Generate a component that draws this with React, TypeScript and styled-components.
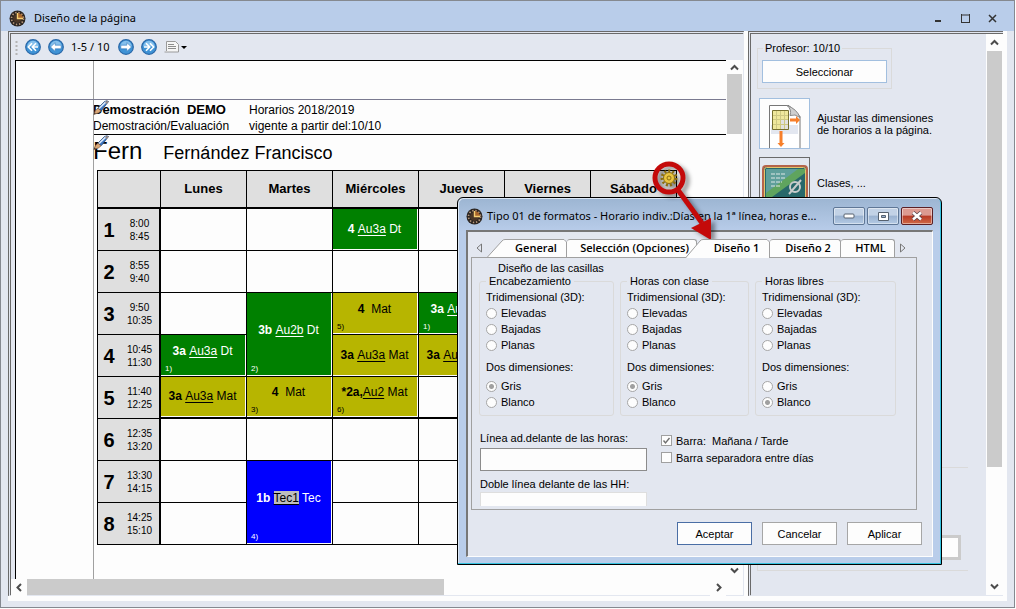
import React from "react";
import styled, { createGlobalStyle } from "styled-components";

const Global = createGlobalStyle`
  * { box-sizing: border-box; }
  html, body { margin: 0; height: 100%; background: #fdfdfd; overflow: hidden; }
  body, button, input { font-family: "Liberation Sans", Arial, sans-serif; font-size: 11px; line-height: 16px; color: #000; }
  button { cursor: pointer; }
`;

const frame = "#b9cdea";
const face = "#e3e7f0";

const AppWindow = styled.main`
  position: relative;
  display: flex;
  flex-direction: column;
  height: calc(100vh - 1px);
  margin-right: 1px;
  border: 1px solid #858990;
  background: ${face};
  overflow: hidden;
`;

const TitleBar = styled.header`
  display: flex;
  align-items: center;
  height: 30px;
  flex: none;
  padding: 4px 8px 0 8px;
  background: ${frame};
`;

const WindowTitle = styled.h1`
  flex: 1;
  margin: 0 0 0 8px;
  font: 400 11px/16px "Noto Sans", sans-serif;
`;

const CaptionButton = styled.button`
  display: flex;
  align-items: center;
  justify-content: center;
  width: 27px;
  height: 20px;
  padding: 0;
  border: 0;
  background: none;
`;

const Workspace = styled.div`
  flex: 1;
  min-height: 0;
  display: flex;
  gap: 4px;
  margin: 0 7px 6px 7px;
  border-bottom: 5px solid #fdfdfd;
  border-right: 4px solid #fdfdfd;
  background: #fdfdfd;
`;

const Pane = styled.section`
  display: flex;
  min-width: 0;
  border: 3px double #6a6a6a;
  border-right: 0;
  border-bottom: 1px solid ${face};
  background: ${face};
`;

const DesignPane = styled(Pane)`
  flex: 1;
  flex-direction: column;
  border-right: 1px solid ${face};
`;

const SidePane = styled(Pane)`
  flex: none;
  width: 255px;
`;

const Toolbar = styled.div`
  display: flex;
  align-items: center;
  gap: 7px;
  height: 26px;
  flex: none;
  padding-left: 4px;
`;

const ToolButton = styled.button`
  display: flex;
  align-items: center;
  padding: 0;
  border: 0;
  background: none;
`;

const Counter = styled.span`
  min-width: 40px;
  font: 11px/16px "Noto Sans", sans-serif;
`;

const Canvas = styled.div`
  flex: 1;
  min-height: 0;
  display: flex;
`;

const Paper = styled.div`
  position: relative;
  flex: 1;
  min-width: 0;
  margin-left: 4px;
  border-top: 1px solid #000;
  border-left: 1px solid #000;
  background: #fdfdfd;
  font-size: 12px;
  overflow: hidden;
`;

const VerticalGuide = styled.i`
  position: absolute;
  top: 0;
  bottom: 0;
  left: 77px;
  border-left: 1px solid #a0a0a0;
`;

const HorizontalGuide = styled.i`
  position: absolute;
  left: 0;
  right: 0;
  top: 38px;
  border-top: 1px solid #7a7a90;
`;

const PageHead = styled.div`
  display: grid;
  grid-template-columns: 156px 1fr;
  margin: 41px 0 0 77px;
  border-bottom: 1px solid #000;
  white-space: pre;
`;

const School = styled.strong`
  font-size: 13px;
`;

const TeacherLine = styled.h2`
  display: flex;
  align-items: baseline;
  gap: 21px;
  height: 35px;
  margin: 0 0 0 77px;
  padding-top: 4px;
  font-weight: 400;
  font-size: 18px;
  line-height: 24px;
`;

const ShortName = styled.span`
  font-size: 24px;
`;

const PencilMark = styled.svg`
  position: absolute;
  left: 77px;
`;

const Timetable = styled.table`
  width: 580px;
  margin-left: 81px;
  table-layout: fixed;
  border-spacing: 0;
  border-left: 1px solid #000;
  border-top: 1px solid #000;
  font-size: 12px;
`;

const DayHead = styled.th`
  height: 38px;
  padding: 0;
  border-right: 1px solid #000;
  border-bottom: 2px solid #000;
  background: #dfdfdf;
  font-size: 13px;
`;

const HourHead = styled.th`
  height: 42px;
  padding: 0;
  border-right: 2px solid #000;
  border-bottom: 1px solid #000;
  background: #dfdfdf;
  font-weight: 400;
`;

const HourBox = styled.div`
  display: grid;
  grid-template-columns: 22px 1fr;
  align-items: center;
  font-size: 10px;
  line-height: 13px;
  b { font-size: 20px; line-height: 24px; }
`;

const Slot = styled.td<{ $fill?: string; $ink?: string; $noted?: boolean; $heavy?: boolean }>`
  position: relative;
  height: 42px;
  padding: 0 2px ${(p) => (p.$noted ? 10 : 2)}px 0;
  border-right: 1px solid #000;
  border-bottom: ${(p) => (p.$heavy ? 2 : 1)}px solid #000;
  background: ${(p) => p.$fill || "#fdfdfd"};
  color: ${(p) => p.$ink || "#000"};
  box-shadow: inset -1px -1px 0 #fdfdfd;
  text-align: center;
  white-space: pre;
  u { text-underline-offset: 2px; }
`;

const Shaded = styled.u`
  background: #bdbdbd;
  color: #000;
`;

const Footnote = styled.small`
  position: absolute;
  left: 4px;
  bottom: 2px;
  font-size: 8px;
  line-height: 10px;
`;

const VerticalScroll = styled.div`
  display: flex;
  flex-direction: column;
  justify-content: space-between;
  align-items: center;
  width: 17px;
  flex: none;
  background: #fdfdfd;
`;

const HorizontalScroll = styled.div`
  display: flex;
  align-items: center;
  height: 16px;
  flex: none;
  padding-right: 17px;
  background: #fdfdfd;
`;

const ScrollArrow = styled.button<{ $short?: boolean }>`
  display: flex;
  align-items: center;
  justify-content: center;
  width: 16px;
  height: ${(p) => (p.$short ? 14 : 17)}px;
  padding: 0;
  border: 0;
  background: #fdfdfd;
`;

const ThumbTrack = styled.div`
  flex: 1;
  align-self: stretch;
`;

const Thumb = styled.div<{ $w?: string; $h?: string; $flush?: boolean }>`
  width: ${(p) => p.$w || "15px"};
  height: ${(p) => p.$h || "15px"};
  margin: 0 ${(p) => (p.$flush ? 0 : "auto")};
  background: #cbcbcb;
`;

const SideTrack = styled(ThumbTrack)`
  display: flex;
  justify-content: center;
`;

const SideContent = styled.div`
  flex: 1;
  display: flex;
  flex-direction: column;
  padding: 8px 18px 24px 6px;
`;

const TeacherGroup = styled.fieldset`
  width: 135px;
  height: 47px;
  margin: 0 0 9px;
  padding: 6px 4px 0 4px;
  border: 1px solid #dadada;
  legend { margin-left: 1px; padding: 0 2px; line-height: 12px; }
`;

const SelectButton = styled.button`
  display: block;
  width: 100%;
  height: 23px;
  padding: 0;
  border: 1px solid #a2bfdf;
  background: #fdfdfd;
`;

const Option = styled.div`
  display: flex;
  align-items: center;
  gap: 7px;
  margin: 0 0 8px 2px;
  line-height: 12px;
`;

const PictureButton = styled.button<{ $framed?: boolean }>`
  display: flex;
  justify-content: center;
  align-items: flex-end;
  width: 51px;
  height: 51px;
  padding: 0;
  border: 1px solid ${(p) => (p.$framed ? "#6a6a6a" : "#a2bfdf")};
  background: ${(p) => (p.$framed ? face : "#fdfdfd")};
`;

const LowerGroup = styled.fieldset`
  height: 104px;
  margin: auto 0 0;
  padding: 67px 7px 0 0;
  border: 1px solid #dadada;
  border-right: 0;
  text-align: right;
`;

const LowerField = styled.input`
  width: 100px;
  height: 25px;
  border: 3px solid #cbcbcb;
  background: #fdfdfd;
`;

const Dialog = styled.div`
  position: absolute;
  left: 456px;
  top: 196px;
  width: 485px;
  display: flex;
  flex-direction: column;
  padding: 0 8px 7px 8px;
  border: 1px solid #000;
  border-radius: 6px 6px 0 0;
  background: linear-gradient(#9cb5d2 0, #b9cdea 34px);
  box-shadow: inset -1px -1px 0 #35c3e0, inset 1px 1px 0 #dbe7f5;
`;

const DialogTitle = styled.header`
  display: flex;
  align-items: center;
  gap: 2px;
  height: 32px;
  padding: 4px 0 0;
  h2 { flex: 1; min-width: 0; margin: 0 0 0 2px; font: 400 11px/16px "Noto Sans", sans-serif; white-space: nowrap; }
`;

const GlassButton = styled.button<{ $close?: boolean }>`
  display: flex;
  align-items: center;
  justify-content: center;
  flex: none;
  width: 32px;
  height: 18px;
  padding: 0;
  border: 1px solid ${(p) => (p.$close ? "#5b1f24" : "#5f7796")};
  border-radius: 2px;
  background: ${(p) =>
    p.$close
      ? "linear-gradient(#dc9a91 0 45%, #b83a26 50%, #cf6a48)"
      : "linear-gradient(#c2d2e6 0 45%, #9ab2d0 50%, #b4cae4)"};
  box-shadow: inset 0 0 0 1px #ffffff70;
`;

const DialogBody = styled.div`
  display: flex;
  flex-direction: column;
  padding: 7px 15px 11px 3px;
  border: 1px solid #fdfdfd;
  border-top: 2px solid #777;
  border-left: 2px solid #777;
  background: ${face};
`;

const TabRow = styled.div`
  display: flex;
  height: 18px;
  align-items: flex-end;
`;

const TabArrow = styled.button`
  display: flex;
  align-items: center;
  justify-content: center;
  width: 16px;
  height: 18px;
  padding: 0;
  border: 0;
  background: none;
`;

const Tab = styled.button<{ $w: number; $slant?: boolean; $active?: boolean }>`
  position: relative;
  z-index: ${(p) => (p.$active ? 2 : 1)};
  width: ${(p) => p.$w}px;
  height: ${(p) => (p.$active ? 19 : 18)}px;
  margin-bottom: ${(p) => (p.$active ? -1 : 0)}px;
  margin-left: ${(p) => (p.$active ? -12 : 0)}px;
  padding: 0 0 1px ${(p) => (p.$slant ? 18 : 6)}px;
  border: ${(p) => (p.$slant ? 0 : "1px solid #a0a0a0")};
  border-width: ${(p) => (p.$slant ? 0 : "1px 1px 0 0")};
  border-radius: 3px 3px 0 0;
  background: ${(p) => (p.$slant ? "none" : "#fdfdfd")};
  font: 600 11px/16px "Open Sans", sans-serif;
  white-space: nowrap;
  svg { position: absolute; inset: 0; z-index: -1; }
`;

const TabPanel = styled.div`
  height: 253px;
  padding: 4px 18px 0 8px;
  border: 1px solid #a0a0a0;
  overflow: hidden;
`;

const PanelTitle = styled.div`
  margin-left: 18px;
  line-height: 13px;
`;

const Groups = styled.div`
  display: grid;
  grid-template-columns: 135px 129px 141px;
  gap: 6px;
  margin-left: -1px;
`;

const Group = styled.fieldset`
  min-width: 0;
  height: 141px;
  margin: 0;
  padding: 2px 6px 0;
  border: 1px solid #dadada;
  border-radius: 3px;
  legend { margin-left: 0; padding: 0 3px; line-height: 12px; }
  p { margin: 0; }
`;

const Choice = styled.label`
  display: flex;
  align-items: center;
  gap: 4px;
  height: 16px;
  white-space: pre;
`;

const FlatHead = styled.p`
  && { margin: 6px 0 3px; }
`;

const Radio = styled.input`
  appearance: none;
  width: 11px;
  height: 11px;
  margin: 0;
  border: 1px solid #a6a6a6;
  border-radius: 50%;
  background: #fdfdfd;
  &:checked { background: radial-gradient(#a0a0a0 0 2px, #fdfdfd 3px); }
`;

const Lower = styled.div`
  display: grid;
  grid-template-columns: 167px 1fr;
  gap: 14px;
  padding-top: 14px;
`;

const Fields = styled.div`
  display: flex;
  flex-direction: column;
`;

const Field = styled.input<{ $soft?: boolean }>`
  height: 23px;
  margin: 2px 0 5px;
  border: 1px solid ${(p) => (p.$soft ? "#dedede" : "#8c8c8c")};
  background: #fdfdfd;
`;

const SoftClip = styled.div`
  display: flex;
  flex-direction: column;
  height: 16px;
  margin-top: -2px;
  overflow: hidden;
`;

const Ticks = styled.div`
  padding-top: 2px;
`;

const TickRow = styled(Choice)`
  height: 17px;
`;

const TickBox = styled.span`
  position: relative;
  display: flex;
  input { appearance: none; width: 11px; height: 11px; margin: 0; border: 1px solid #a0a0a0; background: #fdfdfd; }
  svg { position: absolute; inset: 0; display: none; pointer-events: none; }
  input:checked + svg { display: block; }
`;

const Actions = styled.div`
  display: flex;
  justify-content: flex-end;
  gap: 10px;
  margin: 12px -5px 0 0;
`;

const ActionButton = styled.button<{ $primary?: boolean }>`
  width: 75px;
  height: 23px;
  padding: 0;
  border: 1px solid ${(p) => (p.$primary ? "#4a6ea5" : "#a6a6a6")};
  background: #fdfdfd;
`;

const Callout = styled.svg`
  position: absolute;
  left: 639px;
  top: 149px;
  pointer-events: none;
  filter: drop-shadow(4px 3px 2px #0006);
`;

const ClockIcon = () => (
  <svg width="17" height="17" viewBox="0 0 17 17">
    <circle cx="8.5" cy="8.5" r="8" fill="#2b2521" />
    <circle cx="8.5" cy="8.5" r="6" fill="none" stroke="#b8977a" strokeWidth="1.6" strokeDasharray="1.4 1.75" />
    <circle cx="8.5" cy="8.5" r="4.4" fill="#4a3626" />
    <path d="M8.5 8.5V3a5.500 5.500 0 0 1 5.500 5.500z" fill="#a8652a" />
    <path d="M8.5 3v5.500H14" fill="none" stroke="#f6cf74" strokeWidth="1.4" />
  </svg>
);

const Chevron = ({ d }: { d: string }) => (
  <svg width="9" height="9" viewBox="0 0 9 9">
    <path d={d} fill="none" stroke="#4c4c4c" strokeWidth="2" />
  </svg>
);
const UP = "M1 6.5 4.5 3 8 6.5";
const DOWN = "M1 2.5 4.5 6 8 2.5";
const LEFT = "M6 1 2.5 4.5 6 8";
const RIGHT = "M3 1 6.5 4.5 3 8";

const NavIcon = ({ d, flip, lines }: { d: string; flip?: boolean; lines?: boolean }) => (
  <svg width="16" height="16" viewBox="0 0 16 16">
    <circle cx="8" cy="8" r="7.3" fill="#3f93d6" stroke="#2a68a8" strokeWidth="1.2" />
    <path d="M2.2 7.5a5.8 5.8 0 0 1 11.6 0z" fill="#86c0ec" />
    <path
      d={d}
      transform={flip ? "matrix(-1 0 0 1 16 0)" : undefined}
      fill={lines ? "none" : "#fff"}
      stroke={lines ? "#fff" : "#2f78bd"}
      strokeWidth={lines ? 1.6 : 0.6}
      strokeLinejoin="miter"
    />
  </svg>
);
const ARROW = "M2.500 8l4.700-4.400v2.600h6v3.600h-6v2.600z";
const DOUBLE = "M7 4.200 3.300 8 7 11.800M11 4.200 7.300 8 11 11.800M7.500 8H13";

const Pencil = ({ y }: { y: number }) => (
  <PencilMark style={{ top: y }} width="17" height="16" viewBox="0 0 17 16">
    <path d="M4.500 8.500 11.500 1.500Q14 .2 15.500 1.500L8.500 10.500z" fill="#3b76c4" stroke="#2c4c78" strokeWidth=".8" />
    <path d="M6 8.500 13 1.800" stroke="#dceafa" strokeWidth="1.6" />
    <path d="M12 2l2.800-1.200L15.500 2 13.800 4z" fill="#9c8c86" />
    <path d="M.8 14.500 2.500 10.500 5 8.300l3 2.600-2.500 2z" fill="#dba878" stroke="#7d5c44" strokeWidth=".7" />
    <path d="M.8 14.500l.8-2 1.200 1z" fill="#333" />
  </PencilMark>
);

type Lesson = { cls: string; room?: string; subj: string; fill: string; ink?: string; note?: string; span?: number; shaded?: boolean };
const GREEN = "#008000";
const OLIVE = "#b7b500";
const WHITE = "#fff";
const days = ["Lunes", "Martes", "Miércoles", "Jueves", "Viernes", "Sábado"];
const hours = [["8:00", "8:45"], ["8:55", "9:40"], ["9:50", "10:35"], ["10:45", "11:30"], ["11:40", "12:25"], ["12:35", "13:20"], ["13:30", "14:15"], ["14:25", "15:10"]];
const lessons: Record<string, Lesson> = {
  "0-2": { cls: "4 ", room: "Au3a", subj: " Dt", fill: GREEN, ink: WHITE },
  "2-1": { cls: "3b ", room: "Au2b", subj: " Dt", fill: GREEN, ink: WHITE, note: "2)", span: 2 },
  "2-2": { cls: "4  ", subj: "Mat", fill: OLIVE, note: "5)" },
  "2-3": { cls: "3a ", room: "Au3a", subj: " Dt", fill: GREEN, ink: WHITE, note: "1)" },
  "3-0": { cls: "3a ", room: "Au3a", subj: " Dt", fill: GREEN, ink: WHITE, note: "1)" },
  "3-2": { cls: "3a ", room: "Au3a", subj: " Mat", fill: OLIVE },
  "3-3": { cls: "3a ", room: "Au3a", subj: " Mat", fill: OLIVE },
  "4-0": { cls: "3a ", room: "Au3a", subj: " Mat", fill: OLIVE },
  "4-1": { cls: "4  ", subj: "Mat", fill: OLIVE, note: "3)" },
  "4-2": { cls: "*2a,", room: "Au2", subj: " Mat", fill: OLIVE, note: "6)" },
  "6-1": { cls: "1b ", room: "Tec1", subj: " Tec", fill: "#0000ff", ink: WHITE, note: "4)", span: 2, shaded: true },
};
const covered = new Set(["3-1", "7-1"]);

const LessonText = ({ l }: { l: Lesson }) => (
  <>
    <b>{l.cls}</b>
    {l.room && (l.shaded ? <Shaded>{l.room}</Shaded> : <u>{l.room}</u>)}
    {l.subj}
    {l.note && <Footnote>{l.note}</Footnote>}
  </>
);

const Slant = ({ w, h }: { w: number; h: number }) => (
  <svg width={w} height={h}>
    <path d={`M.5 ${h}L15 2Q16 .5 18 .5H${w - 3}L${w - 0.5} 3V${h}`} fill="#fdfdfd" stroke="#a0a0a0" />
  </svg>
);

const StyleGroup = ({ title, chosen }: { title: string; chosen: string }) => (
  <Group>
    <legend>{title}</legend>
    <p>Tridimensional (3D):</p>
    {["Elevadas", "Bajadas", "Planas"].map((t) => (
      <Choice key={t}><Radio type="radio" name={title} />{t}</Choice>
    ))}
    <FlatHead>Dos dimensiones:</FlatHead>
    {["Gris", "Blanco"].map((t) => (
      <Choice key={t}><Radio type="radio" name={`${title} 2D`} defaultChecked={t === chosen} />{t}</Choice>
    ))}
  </Group>
);

const Tick = ({ text, on }: { text: string; on?: boolean }) => (
  <TickRow>
    <TickBox>
      <input type="checkbox" defaultChecked={on} />
      <svg width="11" height="11"><path d="M2.500 5.500 4.500 8 8.500 3" fill="none" stroke="#707070" strokeWidth="1.4" /></svg>
    </TickBox>
    {text}
  </TickRow>
);

export default function App() {
  return (
    <>
      <Global />
      <AppWindow>
        <TitleBar>
          <ClockIcon />
          <WindowTitle>Diseño de la página</WindowTitle>
          <CaptionButton aria-label="Minimizar"><svg width="9" height="9"><path d="M1 7h6" stroke="#333" strokeWidth="2" /></svg></CaptionButton>
          <CaptionButton aria-label="Maximizar"><svg width="9" height="9"><path d="M0 1h9M.5 0v9M8.500 0v9M0 8.500h9" stroke="#333" /></svg></CaptionButton>
          <CaptionButton aria-label="Cerrar"><svg width="9" height="9"><path d="M1 1l7 7M8 1 1 8" stroke="#333" strokeWidth="1.5" /></svg></CaptionButton>
        </TitleBar>
        <Workspace>
          <DesignPane>
            <Toolbar>
              <svg width="3" height="15"><path d="M1.500 1v14" stroke="#b4b4b4" strokeWidth="2" strokeDasharray="2 2" /></svg>
              <ToolButton aria-label="Primero"><NavIcon d={DOUBLE} lines /></ToolButton>
              <ToolButton aria-label="Anterior"><NavIcon d={ARROW} /></ToolButton>
              <Counter>1-5 / 10</Counter>
              <ToolButton aria-label="Siguiente"><NavIcon d={ARROW} flip /></ToolButton>
              <ToolButton aria-label="Último"><NavIcon d={DOUBLE} flip lines /></ToolButton>
              <ToolButton aria-label="Lista">
                <svg width="24" height="12"><path d="M2.500 10V.5h9l3 3V11H.5" fill="#f6f6f6" stroke="#9a9a9a" /><path d="M4 3.500h6M4 5.500h8M4 7.500h8" stroke="#8d8d8d" /><path d="M17 5h6l-3 3z" /></svg>
              </ToolButton>
            </Toolbar>
            <Canvas>
              <Paper>
                <VerticalGuide />
                <HorizontalGuide />
                <PageHead>
                  <School>Demostración  DEMO</School>
                  <span>Horarios 2018/2019</span>
                  <span>Demostración/Evaluación</span>
                  <span>vigente a partir del:10/10</span>
                </PageHead>
                <TeacherLine><ShortName>Fern</ShortName>Fernández Francisco</TeacherLine>
                <Pencil y={39} />
                <Pencil y={74} />
                <Timetable>
                  <colgroup><col style={{ width: 63 }} />{days.map((d) => <col key={d} style={{ width: 86 }} />)}</colgroup>
                  <thead>
                    <tr><DayHead />{days.map((d) => <DayHead key={d} scope="col">{d}</DayHead>)}</tr>
                  </thead>
                  <tbody>
                    {hours.map(([from, to], r) => (
                      <tr key={from}>
                        <HourHead scope="row"><HourBox><b>{r + 1}</b><span>{from}<br />{to}</span></HourBox></HourHead>
                        {days.map((d, c) => {
                          const key = `${r}-${c}`;
                          if (covered.has(key)) return null;
                          const l = lessons[key];
                          return (
                            <Slot key={d} rowSpan={l?.span} $fill={l?.fill} $ink={l?.ink} $noted={!!l?.note} $heavy={r === 4}>
                              {l && <LessonText l={l} />}
                            </Slot>
                          );
                        })}
                      </tr>
                    ))}
                  </tbody>
                </Timetable>
              </Paper>
              <VerticalScroll>
                <ScrollArrow $short aria-label="Subir"><Chevron d={UP} /></ScrollArrow>
                <ThumbTrack><Thumb $h="60px" /></ThumbTrack>
                <ScrollArrow aria-label="Bajar"><Chevron d={DOWN} /></ScrollArrow>
              </VerticalScroll>
            </Canvas>
            <HorizontalScroll>
              <ScrollArrow aria-label="Izquierda"><Chevron d={LEFT} /></ScrollArrow>
              <ThumbTrack><Thumb $w="61%" $h="16px" $flush /></ThumbTrack>
              <ScrollArrow aria-label="Derecha"><Chevron d={RIGHT} /></ScrollArrow>
            </HorizontalScroll>
          </DesignPane>
          <SidePane>
            <SideContent>
              <TeacherGroup>
                <legend>Profesor: 10/10</legend>
                <SelectButton>Seleccionar</SelectButton>
              </TeacherGroup>
              <Option>
                <PictureButton aria-label="Ajustar">
                  <svg width="34" height="43" viewBox="0 0 34 43">
                    <path d="M1.500 43V.5H21l11 11V43" fill="#fff" stroke="#777" />
                    <path d="M3 20h27v9H3z" fill={face} />
                    <path d="M19 .5q5 4 3 10 5-2 10 2Q29 4 19 .5z" fill="#cfcfcf" stroke="#888" />
                    <path d="M4.500 5.500h16v19h-16z" fill="#efe89c" stroke="#77702f" />
                    <path d="M13 15h7v9h-7z" fill="#e2e2e0" />
                    <path d="M8.500 6v18M12.500 6v18M16.500 6v18M5 10.500h15M5 14.500h15M5 19.500h15" stroke="#cfc983" />
                    <path d="M22 13.500h6v-2.500l4 4-4 4v-2.500h-6zM11.500 26h3v12h2l-3.500 4-3.500-4h2z" fill="#f77f2a" />
                  </svg>
                </PictureButton>
                <span>Ajustar las dimensiones<br />de horarios a la página.</span>
              </Option>
              <Option>
                <PictureButton $framed aria-label="Clases">
                  <svg width="46" height="42" viewBox="0 0 46 42">
                    <rect x="1" y="1" width="44" height="40" rx="3" fill="#28686a" stroke="#b5644a" strokeWidth="2" />
                    <rect x="2.500" y="2.500" width="41" height="37" rx="2" fill="none" stroke="#e2c46c" />
                    <path d="M4 30V4h36z" fill="#5f9f9b" />
                    <path d="M4 28 36 4h7v4L10 32H4z" fill="#5fa45e" />
                    <path d="M9 9h15M9 13h15M9 17h11M9 21h9" stroke="#dfe8e6" strokeDasharray="4 1" />
                    <ellipse cx="33" cy="22" rx="5" ry="5" fill="none" stroke="#c8cccb" strokeWidth="2" />
                    <path d="M27 29 39 15" stroke="#c8cccb" strokeWidth="2" />
                  </svg>
                </PictureButton>
                <span>Clases, ...</span>
              </Option>
              <LowerGroup><LowerField aria-label="Valor" /></LowerGroup>
            </SideContent>
            <VerticalScroll>
              <ScrollArrow aria-label="Subir"><Chevron d={UP} /></ScrollArrow>
              <SideTrack><Thumb $h="79%" $flush /></SideTrack>
              <ScrollArrow aria-label="Bajar"><Chevron d={DOWN} /></ScrollArrow>
            </VerticalScroll>
          </SidePane>
        </Workspace>
        <Dialog role="dialog" aria-label="Tipo 01 de formatos">
          <DialogTitle>
            <ClockIcon />
            <h2>Tipo 01 de formatos - Horario indiv.:Días en la 1ª línea, horas e...</h2>
            <GlassButton aria-label="Minimizar"><svg width="12" height="6"><rect x="1" y="1" width="10" height="4" rx="1" fill="#fff" stroke="#56616f" /></svg></GlassButton>
            <GlassButton aria-label="Maximizar"><svg width="11" height="9"><path d="M.5.5h10v8H.5zM3.500 3.500v2h4v-2z" fill="#fff" fillRule="evenodd" stroke="#56616f" /></svg></GlassButton>
            <GlassButton $close aria-label="Cerrar"><svg width="12" height="10"><path d="M2 1.500l8 7M10 1.500l-8 7" stroke="#56414a" strokeWidth="4" /><path d="M2 1.500l8 7M10 1.500l-8 7" stroke="#fff" strokeWidth="2.500" /></svg></GlassButton>
          </DialogTitle>
          <DialogBody>
            <TabRow>
              <TabArrow aria-label="Pestañas anteriores"><svg width="6" height="10"><path d="M5.500 1v8L1 5z" fill="none" stroke="#777" /></svg></TabArrow>
              <Tab $w={80} $slant><Slant w={80} h={18} />General</Tab>
              <Tab $w={130}>Selección (Opciones)</Tab>
              <Tab $w={85} $slant $active><Slant w={85} h={19} />Diseño 1</Tab>
              <Tab $w={71}>Diseño 2</Tab>
              <Tab $w={54}>HTML</Tab>
              <TabArrow aria-label="Pestañas siguientes"><svg width="6" height="10"><path d="M.5 1v8L5 5z" fill="none" stroke="#777" /></svg></TabArrow>
            </TabRow>
            <TabPanel>
              <PanelTitle>Diseño de las casillas</PanelTitle>
              <Groups>
                <StyleGroup title="Encabezamiento" chosen="Gris" />
                <StyleGroup title="Horas con clase" chosen="Gris" />
                <StyleGroup title="Horas libres" chosen="Blanco" />
              </Groups>
              <Lower>
                <Fields>
                  <label htmlFor="extra">Línea ad.delante de las horas:</label>
                  <Field id="extra" />
                  <label htmlFor="double">Doble línea delante de las HH:</label>
                  <SoftClip><Field id="double" $soft /></SoftClip>
                </Fields>
                <Ticks>
                  <Tick text="Barra:  Mañana / Tarde" on />
                  <Tick text="Barra separadora entre días" />
                </Ticks>
              </Lower>
            </TabPanel>
            <Actions>
              <ActionButton $primary>Aceptar</ActionButton>
              <ActionButton>Cancelar</ActionButton>
              <ActionButton>Aplicar</ActionButton>
            </Actions>
          </DialogBody>
        </Dialog>
        <Callout width="90" height="100" viewBox="0 0 90 100">
          <circle cx="29" cy="28" r="7" fill="none" stroke="#8a6d10" strokeWidth="3" strokeDasharray="2 2" />
          <circle cx="29" cy="28" r="5.500" fill="#e9c53f" stroke="#8a6d10" />
          <circle cx="29" cy="28" r="2" fill="none" stroke="#8a6d10" />
          <circle cx="29" cy="28" r="14" fill="none" stroke="#c40a0a" strokeWidth="5" />
          <path d="M38 40 62 73" stroke="#c40a0a" strokeWidth="5" />
          <path d="M71 90 51 78 71 68z" fill="#c40a0a" />
        </Callout>
      </AppWindow>
    </>
  );
}
